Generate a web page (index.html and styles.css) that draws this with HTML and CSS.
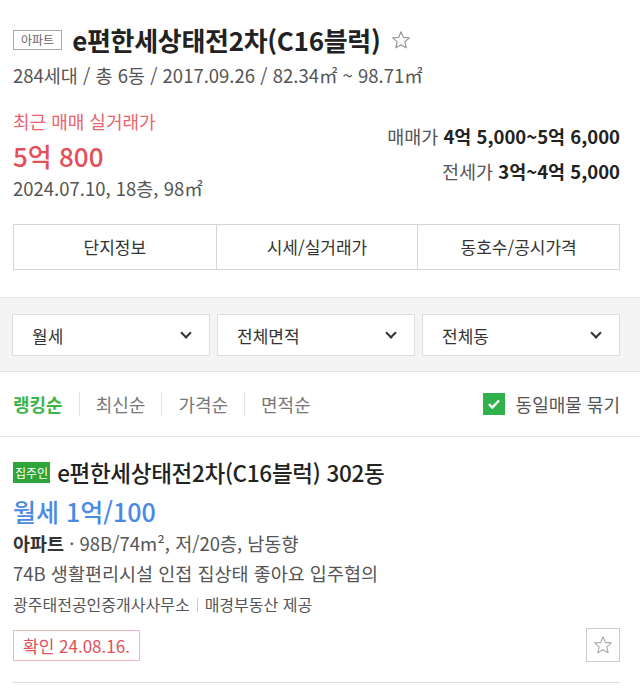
FILE: index.html
```html
<!DOCTYPE html>
<html lang="ko">
<head>
  <meta charset="UTF-8">
  <title>e편한세상태전2차(C16블럭)</title>
  <link rel="stylesheet" href="styles.css">
</head>
<body>

  <!-- 단지 요약 -->
  <div class="complex">
    <div class="complex-title">
      <span class="type-badge">아파트</span>
      <h1>e편한세상태전2차(C16블럭)</h1>
      <svg class="star" width="20" height="20" viewBox="0 0 20 20"><path d="M10 1.8l2.4 5.6 6 .5-4.6 4 1.4 5.9L10 14.7l-5.2 3.1 1.4-5.9-4.6-4 6-.5z" fill="none" stroke="#999" stroke-width="1.2" stroke-linejoin="round"/></svg>
    </div>
    <p class="complex-meta">284세대 / 총 6동 / 2017.09.26 / 82.34㎡ ~ 98.71㎡</p>

    <div class="price-row">
      <div class="recent">
        <p class="recent-label">최근 매매 실거래가</p>
        <p class="recent-price">5억 800</p>
        <p class="recent-info">2024.07.10, 18층, 98㎡</p>
      </div>
      <div class="ranges">
        <p>매매가 <b>4억 5,000~5억 6,000</b></p>
        <p>전세가 <b>3억~4억 5,000</b></p>
      </div>
    </div>

    <div class="tabs">
      <a class="tab">단지정보</a>
      <a class="tab">시세/실거래가</a>
      <a class="tab">동호수/공시가격</a>
    </div>
  </div>

  <!-- 필터 -->
  <div class="filters">
    <div class="select">월세<span class="chev"></span></div>
    <div class="select">전체면적<span class="chev"></span></div>
    <div class="select">전체동<span class="chev"></span></div>
  </div>

  <!-- 정렬 -->
  <div class="sort-bar">
    <ul class="sort">
      <li class="on">랭킹순</li>
      <li>최신순</li>
      <li>가격순</li>
      <li>면적순</li>
    </ul>
    <label class="group-check">
      <span class="box"><svg width="14" height="12" viewBox="0 0 14 12"><path d="M2 6.2l3.3 3.3L12 2.5" fill="none" stroke="#fff" stroke-width="2.4"/></svg></span>
      동일매물 묶기
    </label>
  </div>

  <!-- 매물 -->
  <div class="item">
    <div class="item-title">
      <span class="owner-badge">집주인</span>
      <h2>e편한세상태전2차(C16블럭) 302동</h2>
    </div>
    <p class="item-price">월세 1억/100</p>
    <p class="item-spec"><b>아파트</b> · 98B/74m², 저/20층, 남동향</p>
    <p class="item-desc">74B 생활편리시설 인접 집상태 좋아요 입주협의</p>
    <p class="item-agent">광주태전공인중개사사무소<span class="bar"></span>매경부동산 제공</p>
    <div class="item-foot">
      <span class="confirm">확인 24.08.16.</span>
      <button class="fav"><svg width="20" height="20" viewBox="0 0 20 20"><path d="M10 1.8l2.4 5.6 6 .5-4.6 4 1.4 5.9L10 14.7l-5.2 3.1 1.4-5.9-4.6-4 6-.5z" fill="none" stroke="#aaa" stroke-width="1.1" stroke-linejoin="round"/></svg></button>
    </div>
  </div>

</body>
</html>
```

FILE: styles.css
```css
* {
  box-sizing: border-box;
}

body {
  margin: 0;
  font-family: "Noto Sans CJK KR", "Noto Sans", sans-serif;
  color: #333;
  background: #fff;
}

p {
  margin: 0;
}

.complex {
  padding: 25px 20px 27px 13px;
}

.complex-title {
  display: flex;
  align-items: center;
  height: 30px;
}

.type-badge {
  border: 1px solid #aaa;
  color: #666;
  font-size: 12px;
  line-height: 18px;
  padding: 0 7px;
  margin-right: 10px;
}

h1 {
  margin: 0;
  font-size: 26px;
  line-height: 30px;
  font-weight: 700;
  color: #222;
  letter-spacing: -0.3px;
}

.star {
  margin-left: 11px;
}

.complex-meta {
  margin-top: 7px;
  font-size: 18.5px;
  line-height: 26px;
  color: #555;
}

.price-row {
  display: flex;
  justify-content: space-between;
  margin-top: 21px;
}

.recent-label {
  font-size: 18px;
  line-height: 24px;
  color: #e8656f;
}

.recent-price {
  margin-top: 7px;
  font-size: 26px;
  line-height: 32px;
  color: #e4505a;
  font-weight: 500;
}

.recent-info {
  margin-top: 3px;
  font-size: 18.5px;
  line-height: 26px;
  color: #555;
}

.ranges {
  text-align: right;
  padding-top: 15px;
  font-size: 18.5px;
  line-height: 24px;
  color: #555;
}

.ranges p + p {
  margin-top: 11px;
}

.ranges b {
  color: #222;
  font-weight: 700;
}

.tabs {
  display: grid;
  grid-template-columns: repeat(3, 1fr);
  margin-top: 23px;
  border: 1px solid #d6d6d6;
}

.tab {
  height: 44px;
  line-height: 44px;
  text-align: center;
  font-size: 17px;
  color: #333;
}

.tab + .tab {
  border-left: 1px solid #d6d6d6;
}

.filters {
  display: flex;
  gap: 7px;
  background: #f4f4f4;
  border-top: 1px solid #e6e6e6;
  border-bottom: 1px solid #e3e3e3;
  padding: 16px 20px 15px 12px;
}

.select {
  flex: 1;
  display: flex;
  align-items: center;
  justify-content: space-between;
  height: 42px;
  background: #fff;
  border: 1px solid #ddd;
  padding: 0 19px 0 19px;
  font-size: 17px;
  color: #333;
}

.chev {
  width: 8px;
  height: 8px;
  border-right: 2px solid #333;
  border-bottom: 2px solid #333;
  transform: rotate(45deg);
  margin-top: -5px;
}

.sort-bar {
  display: flex;
  justify-content: space-between;
  align-items: center;
  height: 65px;
  padding: 0 20px 0 13px;
  border-bottom: 1px solid #e6e6e6;
}

.sort {
  display: flex;
  list-style: none;
  margin: 0;
  padding: 0;
  font-size: 18px;
  line-height: 24px;
  color: #777;
}

.sort li + li {
  border-left: 1px solid #e3e3e3;
  margin-left: 16px;
  padding-left: 16px;
}

.sort li.on {
  color: #3bb54a;
  font-weight: 700;
}

.group-check {
  display: flex;
  align-items: center;
  font-size: 18px;
  color: #555;
}

.group-check .box {
  display: flex;
  align-items: center;
  justify-content: center;
  width: 22px;
  height: 22px;
  background: #2fb14c;
  margin-right: 11px;
}

.item {
  margin: 0 20px 0 13px;
  padding: 21px 0 20px;
  border-bottom: 1px solid #dcdcdc;
}

.item-title {
  display: flex;
  align-items: center;
  height: 28px;
}

.owner-badge {
  background: #2ea43a;
  color: #fff;
  font-size: 12px;
  line-height: 21px;
  padding: 0 2px;
  margin-right: 7px;
}

h2 {
  margin: 0;
  font-size: 22.5px;
  line-height: 28px;
  font-weight: 500;
  color: #222;
  letter-spacing: -0.3px;
}

.item-price {
  margin-top: 8px;
  font-size: 25px;
  line-height: 34px;
  color: #4a8ae4;
  font-weight: 500;
}

.item-spec {
  margin-top: 2px;
  font-size: 18.5px;
  line-height: 26px;
  color: #555;
}

.item-spec b {
  color: #333;
}

.item-desc {
  margin-top: 4px;
  font-size: 18.5px;
  line-height: 26px;
  color: #555;
}

.item-agent {
  display: flex;
  align-items: center;
  margin-top: 6px;
  font-size: 16px;
  line-height: 24px;
  color: #555;
}

.item-agent .bar {
  width: 1px;
  height: 14px;
  background: #ccc;
  margin: 2px 7px 0;
}

.item-foot {
  display: flex;
  justify-content: space-between;
  align-items: center;
  margin-top: 12px;
}

.confirm {
  border: 1px solid #f3b8bd;
  color: #e3505b;
  font-size: 17px;
  line-height: 29px;
  padding: 0 9px;
}

.fav {
  display: flex;
  align-items: center;
  justify-content: center;
  width: 34px;
  height: 34px;
  padding: 0;
  background: #fff;
  border: 1px solid #ccc;
}
```
